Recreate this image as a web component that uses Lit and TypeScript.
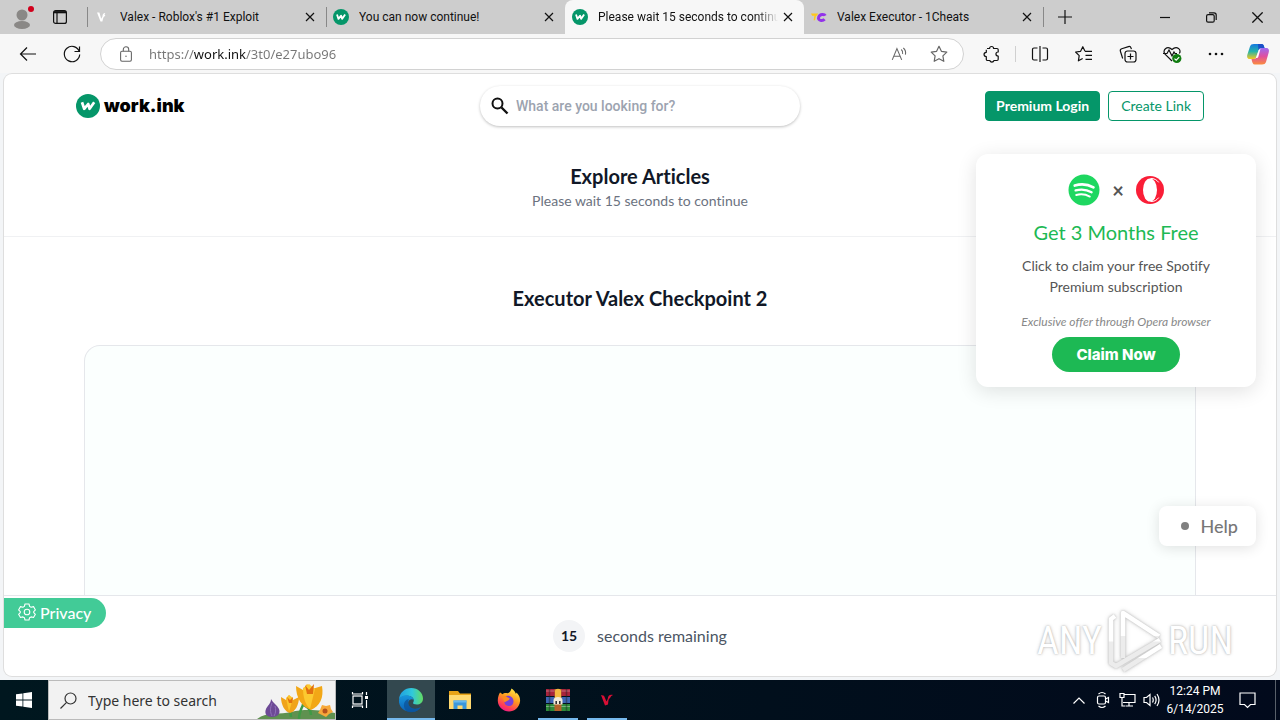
import { LitElement, html, css, svg } from "lit";
import { customElement } from "lit/decorators.js";

const workIcon = html`<svg viewBox="0 0 24 24" aria-hidden="true">
  <circle cx="12" cy="12" r="12" fill="#059669" />
  <path d="M6 8.200l2.200 6.600 4-4.800 1.400 4.800 4.600-6.600" fill="none" stroke="#fff" stroke-width="2.700" stroke-linejoin="round" />
</svg>`;

const valexIcon = html`<svg viewBox="0 0 16 16" aria-hidden="true">
  <path d="M3 3.500h2.400l1.800 6.200 1.300-2.400c-.2-1.600.8-3.400 2.800-3.400l-.8 1.800.9.8-1 1c-1 .6-1.300 1.900-2 5H6.500Z" fill="#fff" />
</svg>`;

const cheatsIcon = html`<svg viewBox="0 0 16 16" aria-hidden="true">
  <path d="M0 4.500h7l-1 2.200H5l-1 4.500H2.600l.8-4.500H1Z" fill="#ffc81e" />
  <path d="M14.300 6.600c-.8-1.500-5.300-2-6.600 1.400-1.300 4 4 4.300 5.900 2.300" fill="none" stroke="#9333ea" stroke-width="3" />
</svg>`;

const cross = html`<svg class="x" viewBox="0 0 10 10" aria-hidden="true"><path d="M1 1l8 8M9 1l-8 8" /></svg>`;

const line = (content: unknown, size = 20) => html`<svg class="line" width=${size} height=${size} viewBox="0 0 20 20" aria-hidden="true">${content}</svg>`;

const icons = {
  back: svg`<path d="M18 10H2.500M9 3.500L2.500 10 9 16.500" />`,
  reload: svg`<path d="M17.300 7.500A7.700 7.700 0 1 0 17.700 10.500M17.500 2.500v5h-5" />`,
  lock: svg`<rect x="4" y="7" width="12" height="11" rx="1.500" /><path d="M7 7V5a3 3 0 0 1 6 0v2" /><circle cx="10" cy="12.500" r=".8" fill="currentColor" stroke="none" />`,
  read: svg`<path d="M2.500 16.500L7.700 4l5.300 12.500M4.300 12.500h7M12.500 5c1.500 1.300 2 3 1.500 5M14.800 3.300c2.300 1.900 3 4.500 2.300 7.500" />`,
  star: svg`<path d="M10 2.300l2.400 5 5.400.8-3.900 3.800.9 5.400-4.800-2.600-4.800 2.600.9-5.400L2.200 8.100l5.400-.8Z" stroke-linejoin="round" />`,
  ext: svg`<path d="M5 4.500h2.600a2 2 0 0 1 4 0H15a1.200 1.200 0 0 1 1.200 1.200V8c-3 0-3 4 0 4v3.300a1.200 1.200 0 0 1-1.200 1.200h-3a2.200 2.200 0 0 1-4.200 0H5.500a1.200 1.200 0 0 1-1.200-1.200v-2.800c-3-.2-3-4 0-4.200V5.700" stroke-linejoin="round" />`,
  split: svg`<path d="M7.500 4H4a1.500 1.500 0 0 0-1.500 1.500v9A1.500 1.500 0 0 0 4 16h3.500M12.500 4H16a1.500 1.500 0 0 1 1.500 1.500v9A1.500 1.500 0 0 1 16 16h-3.500M10 2v16" />`,
  favs: svg`<path d="M11 7.300L8.800 2.700 6.600 7.300l-5 .7 3.600 3.600-.8 5.200 4.300-2.300M11 7.300h7M11.500 11.300H18M11.500 15.300H18" stroke-linejoin="round" />`,
  collections: svg`<rect x="7" y="7" width="11" height="11" rx="2.500" /><path d="M12.500 9.500v6M9.500 12.500h6M4.700 14.500L2.400 7.300A2 2 0 0 1 3.700 4.800L10.500 2.600a2 2 0 0 1 2.500 1.300l.4 1.200" />`,
  health: svg`<path d="M10 17L3 10.200C-.2 6.500 5 .8 10 5.500 15 .8 20 6 17.300 9.500M1 9.500h4l2-3.500 3 6 2-4 1 1.500h2" /><circle cx="14.800" cy="14.500" r="4.600" fill="#107c10" stroke="none" /><path d="M12.500 14.600l1.700 1.600 3-3" stroke="#fff" />`,
  dots: svg`<g fill="currentColor" stroke="none"><circle cx="4" cy="10" r="1.300" /><circle cx="10" cy="10" r="1.300" /><circle cx="16" cy="10" r="1.300" /></g>`,
};

const copilot = html`<svg width="24" height="24" viewBox="0 0 24 24" aria-hidden="true">
  <defs>
    <linearGradient id="ca" x1="0" y1="0" x2="0" y2="1"><stop offset="0" stop-color="#1478e0" /><stop offset=".5" stop-color="#26b4a8" /><stop offset="1" stop-color="#f5c81e" /></linearGradient>
    <linearGradient id="cb" x1="0" y1="0" x2="0" y2="1"><stop offset="0" stop-color="#9b6bf2" /><stop offset=".5" stop-color="#e04fa0" /><stop offset="1" stop-color="#fb8c3c" /></linearGradient>
  </defs>
  <path d="M8 2h7.500c2 0 2.300 1.500 3 4h-3.200c-1.500 0-2.300 1-2.800 2.600L10.300 15c-.6 1.500-1.300 2-3 2H3.600C1 17 .8 14.500 1.400 12.500L4 4.500C4.600 2.800 5.800 2 8 2Z" fill="url(#ca)" />
  <path d="M12 2h3.500c2 0 2.300 1.500 3 4h-3.200c-1.500 0-2.300 1-2.800 2.600Z" fill="#1b50c8" />
  <path d="M16 22.500H8.800c-2 0-2.600-2-3.300-5.500h2.200c1.700 0 2.300-.8 2.800-2.300l2.200-6.300c.5-1.600 1.300-2.400 3-2.400h4.600c2.700 0 3 2.500 2.400 4.500L20 20c-.6 1.700-1.800 2.500-4 2.500Z" fill="url(#cb)" />
  <path d="M10.800 13.500l1.800-5c.4-1 1-1.500 1.800-1.500l-2 7.500c-.4 1-.8 1.500-2.600 1.500Z" fill="#fff" />
</svg>`;

const spotify = html`<svg width="32" height="32" viewBox="0 0 32 32" aria-hidden="true">
  <circle cx="16" cy="16" r="15.500" fill="#1ed760" />
  <g fill="none" stroke="#fff" stroke-linecap="round"><path d="M6.800 11.500c6-1.700 13.300-1.100 18.600 1.900" stroke-width="2.800" /><path d="M7.600 16.400c5.400-1.500 11.400-.8 16 1.800" stroke-width="2.300" /><path d="M8.200 21c4.600-1.200 9.500-.7 13.600 1.600" stroke-width="1.900" /></g>
</svg>`;

const opera = html`<svg width="28" height="28" viewBox="0 0 28 28" aria-hidden="true">
  <circle cx="14" cy="14" r="14" fill="#fa1e37" />
  <ellipse cx="14" cy="14" rx="7" ry="11.500" fill="#fff" />
  <path d="M14.500 2.500c3.500-.3 6.500 1.500 8.200 3.900M14.500 25.500c3.500.3 6.500-1.500 8.200-3.900" fill="none" stroke="#fff" stroke-width="1" />
</svg>`;

const edge = html`<svg width="26" height="26" viewBox="0 0 26 26" aria-hidden="true">
  <defs>
    <linearGradient id="e1" x1="0" x2="1"><stop offset="0" stop-color="#1f9fe0" /><stop offset=".55" stop-color="#30c8dc" /><stop offset="1" stop-color="#63dc62" /></linearGradient>
    <linearGradient id="e2" x1="0" x2="0" y1="0" y2="1"><stop offset="0" stop-color="#1896dc" /><stop offset="1" stop-color="#0b62b8" /></linearGradient>
  </defs>
  <path d="M1 12.500C1.500 5.500 7 1 13.200 1 20 1 25 6 25 11.500c0 4-3 6-6.200 6-2.600 0-4.300-.8-3.600-2 1.300-2 .7-5.500-3.700-6.500C7 8 2.500 9.500 1 12.500Z" fill="url(#e1)" />
  <path d="M1 13c.8-3 4.400-5 8.500-4.600 3.500.4 5.800 2.300 6.300 4.600-1.500-1.500-4.800-1-5.500 2-.8 4 3.500 7.500 8 6.800 2-.3 3.700-1.300 4.500-1.800C21 23 17.500 25 13.500 25 6 25 .3 19.500 1 13Z" fill="url(#e2)" />
  <path d="M10 25C4.500 22 4.200 13.500 10.800 12c-1.800 4 .4 10 7.500 9.800 2-.1 3.700-1.300 4.500-1.800C19.500 25 15 25.800 10 25Z" fill="#0c4f94" opacity=".7" />
</svg>`;

const explorer = html`<svg width="24" height="24" viewBox="0 0 24 24" aria-hidden="true">
  <path d="M1 3h9l2 2.500h11V8H1Z" fill="#e8a317" /><path d="M1 7h22v14H1Z" fill="#ffd970" />
  <path d="M5.500 12.500h13V21h-4v-3.500h-5V21h-4Z" fill="#3b97dc" /><path d="M5.500 12.500h13v2h-13Z" fill="#69b9ee" />
</svg>`;

const firefox = html`<svg width="24" height="24" viewBox="0 0 24 24" aria-hidden="true">
  <defs><linearGradient id="ff" x1=".8" y1="0" x2=".3" y2="1"><stop offset="0" stop-color="#fff04a" /><stop offset=".45" stop-color="#ff9a1e" /><stop offset=".8" stop-color="#ff3d57" /><stop offset="1" stop-color="#f0178a" /></linearGradient></defs>
  <path d="M3 4.500c1 .3 1.800 1 2.200 1.800C7 4.800 9 5 10.500 5.300 12.500 4.800 13.800 3 14.500.5c2 1 3.500 3 4.300 5.200.4-.2.700-.7.700-1.200C22 7 23.500 10 23 13.500 22.300 19.500 17.500 23.500 12 23.500S1 19 .8 13C.7 9.500 1.800 6.500 3 4.500Z" fill="url(#ff)" />
  <path d="M8 8.500c2.500-1.500 8-1 8.500 4.500.2 3-2 5.500-5 5-3-.4-4.500-2.500-4-5l3.500-.5c1-.5 2-1.500.5-2.200Z" fill="#7a3fd8" /><path d="M5 9c2-1.500 4.500-1 5.500.5 1.500.3 2.500 1 2 1.500-2 .5-2.500 3-5 3" fill="#ff8a1e" />
</svg>`;

const winrar = html`<svg width="24" height="24" viewBox="0 0 24 24" aria-hidden="true">
  <path d="M0 1h24v7H0Z" fill="#a8243c" /><path d="M0 9h24v6H0Z" fill="#3d66b4" /><path d="M0 16h24v7H0Z" fill="#2d8a3a" />
  <path d="M0 3h24M0 18.500h24" stroke="#fff" stroke-opacity=".35" /><path d="M3.500 1v22M20.500 1v22" stroke="#222" stroke-opacity=".45" stroke-width="1.500" />
  <path d="M8.500 1h7v22h-7Z" fill="#b5622a" /><path d="M9 3c0-3 6-3 6 0v7H9Z" fill="#f5b942" /><path d="M7.500 16.500V12c0-4 9-4 9 0v4.500Z" fill="#f2ead8" /><path d="M10.200 16v-3M13.800 16v-3" fill="none" stroke="#333" stroke-width="1.600" />
</svg>`;

const valexRed = html`<svg width="20" height="20" viewBox="0 0 20 20" aria-hidden="true">
  <path d="M4 5l4 10.500 3-1C11.500 11 11.200 9 13 8l1.300-2L16 5c-3-1-5 .5-5.200 3.800L9.500 11.500 7 5.800Z" fill="#d80f35" />
</svg>`;

const flowers = html`<svg class="flowers" width="78" height="38" viewBox="0 0 78 38" aria-hidden="true">
  <path d="M0 38c10-8 24-4 34-7 16-4 34-1 44 1v6Z" fill="#5f9150" />
  <path d="M42 38c0-6 2-10 4-14M54 34c0-6-4-8-9-11M34 36c0-4-1-8-3-12" stroke="#3e9a45" stroke-width="2.500" fill="none" />
  <path d="M14 18c2 4 6 6 8 10 2 5-2 8-7 8s-8-3-6-8c1-3 5-5 5-10Z" fill="#6d4a96" /><path d="M15 22c-2 5-2 9 0 13M18 25c1 3 1 7-1 10" stroke="#8f70b8" fill="none" />
  <path d="M24 16l5 3 3-5 4 5 6-3c0 8-4 15-9 16-5-1-9-8-9-16Z" fill="#f0a31a" /><path d="M29 17l3-3 4 3-4 14Z" fill="#fcc42c" />
  <path d="M39 5l7 4 4-6 5 5 10-3c2 12-2 20-11 24-9-3-15-12-15-24Z" fill="#f2a716" /><path d="M46 7l6-4 6 5-5 20c-5-5-7-12-7-21Z" fill="#fcc930" /><path d="M48 4l4 5 5-6-1 10h-6Z" fill="#e2700f" /><path d="M30 16l3 3 3-3-1 6h-3Z" fill="#e2700f" />
  <path d="M65 24l4 1 4-1 1 4 2 3-4 2-3 3-4-2-4-2 2-3Z" fill="#f7a83a" /><circle cx="68" cy="30" r="2.500" fill="#b5521c" />
</svg>`;

const watermark = html`<svg class="play" width="58" height="66" viewBox="0 0 58 66" aria-hidden="true">
  <defs><linearGradient id="wm" x1="0" x2="0" y1="0" y2="1"><stop offset=".5" stop-color="#fff" /><stop offset=".52" stop-color="#ececec" /></linearGradient></defs>
  <g fill="none" stroke="url(#wm)" stroke-width="4.500" stroke-linejoin="round">
    <path d="M17 50V5l36 23.500" />
    <path d="M9 8L5 11v44l5 3 44-26" />
    <path d="M17 62l38-24" />
  </g>
</svg>`;

interface Tab { title: string; icon: unknown; active?: boolean }

const tabs: Tab[] = [
  { title: "Valex - Roblox's #1 Exploit", icon: valexIcon },
  { title: "You can now continue!", icon: workIcon },
  { title: "Please wait 15 seconds to continue", icon: workIcon, active: true },
  { title: "Valex Executor - 1Cheats", icon: cheatsIcon },
];

const reset = css`
  *, *::before, *::after { box-sizing: border-box; }
  button, input { font: inherit; color: inherit; border: 0; padding: 0; margin: 0; background: none; outline: none; }
  button { display: flex; align-items: center; justify-content: center; flex: none; }
  svg { display: block; flex: none; }
  .line, .x { fill: none; stroke: currentColor; stroke-width: 1.2; }
`;

@customElement("browser-chrome")
class BrowserChrome extends LitElement {
  static styles = [reset, css`
    :host { display: block; font-family: "Open Sans", "Noto Sans", sans-serif; color: #111; }
    .strip { display: flex; height: 34px; background: #cdcdcd; }
    .lead { display: flex; align-items: center; width: 87px; padding-left: 12px; gap: 17px; }
    .tabs { display: flex; flex: 0 1 956px; min-width: 0; }
    .tab { position: relative; display: flex; flex: 1 1 0; min-width: 0; align-items: center; padding: 0 8px 0 7px; font: 12px/18px Roboto, sans-serif; }
    .tab::before { content: ""; align-self: center; width: 1px; height: 20px; margin: 0 6px 0 -7px; background: #888; }
    .tab > svg { width: 16px; height: 16px; }
    .name { flex: 1; margin-left: 10px; white-space: nowrap; overflow: hidden; }
    .active { background: #f7f7f7; border-radius: 8px 8px 0 0; }
    .active .name { margin-right: -8px; mask-image: linear-gradient(90deg, #000 88%, transparent); }
    .active::before, .active + .tab::before { background: transparent; }
    .close { width: 16px; height: 24px; margin-left: 10px; }
    .close svg { width: 10px; height: 10px; }
    .new { width: 44px; position: relative; }
    .new::before { content: ""; position: absolute; left: 0; top: 7px; width: 1px; height: 20px; background: #888; }
    .window { display: flex; margin-left: auto; }
    .window button { width: 46px; }
    .bar { display: flex; align-items: center; height: 39px; background: #f7f7f7; padding: 0 2px 0 6px; }
    .bar > button { width: 44px; height: 32px; }
    .address { display: flex; flex: 1; min-width: 0; align-items: center; height: 32px; margin: 0 6px; padding: 0 14px 0 16px; border: 1px solid #d2d2d2; border-radius: 16px; background: #fff; color: #666; gap: 10px; }
    .address button { width: 20px; margin-left: 10px; }
    .url { flex: 1; min-width: 0; font: 13px/20px "Noto Sans", sans-serif; margin-left: 4px; color: transparent; background: linear-gradient(90deg, #767676 45px, #111 45px, #111 97px, #767676 97px); -webkit-background-clip: text; background-clip: text; }
    .rule { width: 1px; height: 16px; background: #d0d0d0; margin: 0 2px 0 1px; }
    .bar > .copilot { width: 40px; }
  `];

  render() {
    return html`
      <div class="strip">
        <div class="lead">
          <svg width="24" height="26" viewBox="0 0 24 26" aria-hidden="true"><circle cx="10" cy="11" r="5.500" fill="#8a8886" /><ellipse cx="10" cy="21" rx="8" ry="4" fill="#8a8886" /><circle cx="19" cy="5" r="3" fill="#d1001c" /></svg>
          <svg width="14" height="14" viewBox="0 0 14 14" aria-hidden="true"><rect x=".6" y=".6" width="12.800" height="12.800" rx="2" fill="none" stroke="#111" stroke-width="1.200" /><path d="M1 2.200h12" stroke="#111" stroke-width="2.200" /><path d="M4 3v10" stroke="#111" stroke-width="1.200" /></svg>
        </div>
        <div class="tabs" role="tablist">
          ${tabs.map((t) => html`<div class="tab ${t.active ? "active" : ""}" role="tab" aria-selected=${t.active ? "true" : "false"}>
            ${t.icon}<span class="name">${t.title}</span><button class="close" aria-label="Close tab">${cross}</button>
          </div>`)}
        </div>
        <button class="new" aria-label="New tab"><svg class="line" width="14" height="14" viewBox="0 0 14 14"><path d="M7 0v14M0 7h14" /></svg></button>
        <div class="window">
          <button aria-label="Minimize"><svg class="line" width="10" height="10" viewBox="0 0 10 10"><path d="M0 5.500h10" /></svg></button>
          <button aria-label="Restore"><svg class="line" width="11" height="11" viewBox="0 0 11 11"><rect x=".6" y="2.600" width="7.600" height="7.600" rx="1.500" /><path d="M3 .8h5a2.200 2.200 0 0 1 2.200 2.200v5" /></svg></button>
          <button aria-label="Close"><svg class="line" width="11" height="11" viewBox="0 0 10 10"><path d="M.3.3l9.400 9.400M9.700.3L.3 9.700" /></svg></button>
        </div>
      </div>
      <div class="bar">
        <button aria-label="Back">${line(icons.back)}</button>
        <button aria-label="Refresh">${line(icons.reload)}</button>
        <div class="address">
          ${line(icons.lock, 18)}
          <input class="url" aria-label="Address" value="https://work.ink/3t0/e27ubo96" />
          <button aria-label="Read aloud">${line(icons.read, 18)}</button>
          <button aria-label="Favorite">${line(icons.star)}</button>
        </div>
        <button aria-label="Extensions">${line(icons.ext)}</button>
        <span class="rule"></span>
        <button aria-label="Split screen">${line(icons.split)}</button>
        <button aria-label="Favorites">${line(icons.favs)}</button>
        <button aria-label="Collections">${line(icons.collections)}</button>
        <button aria-label="Browser essentials">${line(icons.health)}</button>
        <button aria-label="Settings">${line(icons.dots)}</button>
        <button class="copilot" aria-label="Copilot">${copilot}</button>
      </div>`;
  }
}

@customElement("work-page")
class WorkPage extends LitElement {
  static styles = [reset, css`
    :host { position: relative; display: flex; flex-direction: column; min-height: 0; overflow: hidden; background: #fff; font-family: Lato, sans-serif; font-variant-ligatures: none; color: #111827; border-radius: 8px; box-shadow: 0 0 0 1px #dedede; }
    h1, h2, h3, p { margin: 0; }
    header { display: grid; grid-template-columns: 1fr 320px 1fr; align-items: center; padding: 12px 72px; }
    .brand { display: flex; align-items: center; gap: 4px; color: #000; text-decoration: none; font: 900 18px/24px Inter, sans-serif; }
    .brand svg { width: 24px; height: 24px; }
    .search { display: flex; align-items: center; height: 40px; padding: 0 10px; gap: 6px; border-radius: 20px; box-shadow: 0 1px 3px rgba(0, 0, 0, .25); }
    .search input { flex: 1; min-width: 0; font: 500 14px/20px Roboto, sans-serif; }
    .search input::placeholder { color: #9ca3af; opacity: 1; }
    .actions { display: flex; justify-content: flex-end; gap: 8px; }
    .actions button { height: 30px; padding: 0 12px 2px; border: 1px solid #059669; border-radius: 4px; font-size: 14px; color: #059669; white-space: nowrap; }
    .actions .primary { padding: 0 10px 2px; background: #059669; color: #fff; font-weight: 700; }
    main { flex: 1; min-height: 0; overflow: hidden; display: flex; flex-direction: column; text-align: center; }
    .intro { padding: 24px 0; border-bottom: 1px solid #f0f1f3; }
    h1, h2 { font-size: 20px; line-height: 28px; font-weight: 700; }
    .intro p { font-size: 14px; line-height: 22px; color: #6b7280; }
    .article { flex: 1; display: flex; flex-direction: column; padding: 47px 80px 0; gap: 33px; }
    .panel { flex: 1; border: 1px solid #e5e7eb; border-bottom: 0; border-radius: 16px 16px 0 0; background: #fbfffe; }
    footer { display: flex; align-items: center; justify-content: center; gap: 12px; padding: 24px 0; border-top: 1px solid #e5e7eb; color: #4b5563; font-size: 16px; line-height: 20px; }
    .count { display: grid; place-items: center; width: 32px; height: 32px; border-radius: 50%; background: #f3f4f6; color: #111827; font-size: 14px; font-weight: 700; }
    .offer { position: absolute; top: 80px; right: 20px; width: 280px; padding: 20px 24px 15px; display: flex; flex-direction: column; align-items: center; text-align: center; border-radius: 12px; background: #fff; box-shadow: 0 4px 20px rgba(0, 0, 0, .12); }
    .logos { display: flex; align-items: center; gap: 12px; color: #555; font: 700 20px/32px Lato, sans-serif; }
    .offer h3 { margin-top: 12px; font-size: 20px; line-height: 28px; font-weight: 400; color: #1db954; }
    .offer p { margin-top: 9px; padding: 0 16px; font-size: 14px; line-height: 21px; color: #555; }
    .offer .note { margin-top: 16px; padding: 0; font-size: 12px; line-height: 17px; font-style: italic; color: #888; }
    .claim { height: 35px; margin-top: 7px; padding: 0 24px; border-radius: 18px; background: #1db954; color: #fff; font: 800 15px/20px Inter, sans-serif; }
    .help { position: absolute; right: 20px; bottom: 130px; height: 40px; padding: 0 18px 0 22px; gap: 12px; border-radius: 8px; background: #fff; box-shadow: 0 2px 14px rgba(0, 0, 0, .12); color: #777; font-size: 18px; font-weight: 500; }
    .help::before { content: ""; width: 8px; height: 8px; border-radius: 50%; background: #808080; }
    .privacy { position: absolute; left: 0; bottom: 48px; height: 30px; padding: 0 15px 2px 14px; gap: 4px; border-radius: 0 15px 15px 0; background: #42cb97; color: #fff; font-size: 16px; font-weight: 500; }
    .mark { position: absolute; right: 43px; bottom: 2px; display: flex; align-items: center; gap: 4px; color: #fff; font: 400 38px/40px "Roboto Condensed", "Liberation Sans Narrow", Roboto, sans-serif; text-shadow: 0 0 2px #aaa, 0 0 4px #ddd; pointer-events: none; }
    .play { filter: drop-shadow(0 0 1px #bbb) drop-shadow(0 0 2px #ddd); }
  `];

  render() {
    return html`
      <header>
        <a class="brand" href="#">${workIcon}<span>work.ink</span></a>
        <label class="search">
          <svg width="20" height="20" viewBox="0 0 20 20" aria-hidden="true"><circle cx="7.500" cy="7.500" r="5" fill="none" stroke="#111" stroke-width="2" /><path d="M11.500 11.500l6 6" stroke="#111" stroke-width="2.400" /></svg>
          <input type="search" aria-label="Search" placeholder="What are you looking for?" />
        </label>
        <div class="actions"><button class="primary">Premium Login</button><button>Create Link</button></div>
      </header>
      <main>
        <section class="intro"><h1>Explore Articles</h1><p>Please wait 15 seconds to continue</p></section>
        <section class="article"><h2>Executor Valex Checkpoint 2</h2><div class="panel"></div></section>
      </main>
      <footer><span class="count">15</span><span>seconds remaining</span></footer>
      <aside class="offer">
        <div class="logos">${spotify}<span>×</span>${opera}</div>
        <h3>Get 3 Months Free</h3>
        <p>Click to claim your free Spotify Premium subscription</p>
        <p class="note">Exclusive offer through Opera browser</p>
        <button class="claim">Claim Now</button>
      </aside>
      <button class="help">Help</button>
      <button class="privacy">
        <svg width="18" height="18" viewBox="0 0 18 18" fill="none" stroke="#fff" stroke-width="1.100" stroke-linejoin="round" aria-hidden="true"><circle cx="9" cy="9" r="2.800" /><path d="M7 1h4l.6 2.400 1.500.9 2.400-.7 1.900 3.300L15.700 8.600v1l1.700 1.700-1.900 3.200-2.400-.6-1.500.8L11 17H7l-.6-2.300-1.500-.8-2.400.6-1.900-3.200 1.700-1.700v-1L.6 6.900l1.900-3.300 2.400.7 1.500-.9Z" /></svg>
        Privacy
      </button>
      <div class="mark"><span>ANY</span>${watermark}<span>RUN</span></div>`;
  }
}

@customElement("task-bar")
class TaskBar extends LitElement {
  static styles = [reset, css`
    :host { display: flex; height: 40px; background: linear-gradient(90deg, #00171f, #010f1c 60%, #020a1c); color: #fff; font-family: "Noto Sans", sans-serif; }
    .app { position: relative; width: 48px; height: 40px; margin-right: 1px; }
    .start { margin: 0; }
    .search { display: flex; align-items: center; width: 288px; border: 1px solid #bbb; background: #f2f2f2; color: #333; padding-left: 11px; gap: 11px; overflow: hidden; }
    .search input { flex: 1; min-width: 0; font-size: 14px; }
    .search input::placeholder { color: #333; opacity: 1; }
    .flowers { margin-left: -10px; }
    .task { margin-right: 3px; }
    .current { background: #33484f; }
    .open::after { content: ""; position: absolute; left: 4px; right: 4px; bottom: 0; height: 2px; background: #76b9ed; }
    .current::after { left: 0; right: 0; }
    .tray { display: flex; align-items: center; margin-left: auto; }
    .tray button { width: 24px; height: 40px; }
    .tray .clock { width: 64px; flex-direction: column; font: 12px/18px Roboto, sans-serif; white-space: nowrap; }
    .tray .notice { width: 40px; margin-right: 8px; }
    .desktop { width: 5px; height: 40px; border-left: 1px solid #59606a; }
  `];

  private app(icon: unknown, label: string, cls = "") {
    return html`<button class="app ${cls}" aria-label=${label}>${icon}</button>`;
  }

  render() {
    return html`
      ${this.app(html`<svg width="16" height="16" viewBox="0 0 16 16" fill="#fff"><path d="M0 2.300l6.500-.9v6.200H0ZM7.300 1.300L16 0v7.600H7.300ZM0 8.400h6.500v6.200L0 13.700ZM7.300 8.400H16V16l-8.700-1.300Z" /></svg>`, "Start", "start")}
      <label class="search">
        <svg class="line" width="17" height="17" viewBox="0 0 17 17" aria-hidden="true"><circle cx="10.500" cy="6.500" r="5.500" /><path d="M6.600 10.400L.5 16.500" /></svg>
        <input aria-label="Search Windows" placeholder="Type here to search" />
        ${flowers}
      </label>
      ${this.app(html`<svg class="line" width="18" height="18" viewBox="0 0 18 18"><rect x="2" y="5" width="9" height="8" /><path d="M1.500 1v2h10V1M1.500 17v-2h10v2M15.500 1v3M15.500 9v8" /><path d="M14 6.500h3" stroke-width="3" /></svg>`, "Task view", "task")}
      ${this.app(edge, "Edge", "open current")}
      ${this.app(explorer, "File Explorer")}
      ${this.app(firefox, "Firefox")}
      ${this.app(winrar, "WinRAR", "open")}
      ${this.app(valexRed, "Valex", "open")}
      <div class="tray">
        <button aria-label="Show hidden icons"><svg class="line" width="12" height="7" viewBox="0 0 12 7"><path d="M.5 6.500L6 1l5.500 5.500" /></svg></button>
        <button aria-label="Meet now"><svg class="line" width="14" height="18" viewBox="0 0 14 18"><rect x="1.500" y="5" width="8" height="8" rx="1.500" /><path d="M9.500 8l3-1.500v5L9.500 10M2.500 3Q6 0 9.500 3M2.500 15q3.500 3 7 0" /></svg></button>
        <button aria-label="Network"><svg class="line" width="17" height="16" viewBox="0 0 17 16"><path d="M5 2.500h11v8H4M10 10.500v3M6.500 14H14M1 1.500h4v4H1ZM3 5.500V14h3" /></svg></button>
        <button aria-label="Volume"><svg class="line" width="17" height="16" viewBox="0 0 17 16"><path d="M1 5.500h2.500l3.500-3v11l-3.500-3H1ZM9.500 5.500q1.500 2.500 0 5M11.700 3.800q2.800 4.200 0 8.400M14 2q4 6 0 12" /></svg></button>
        <button class="clock"><span>12:24 PM</span><span>6/14/2025</span></button>
        <button class="notice" aria-label="Notifications"><svg class="line" width="17" height="17" viewBox="0 0 17 17"><path d="M1 1h15v11.500h-4.500l-3 3-3-3H1Z" /></svg></button>
        <span class="desktop"></span>
      </div>`;
  }
}

@customElement("app-root")
class AppRoot extends LitElement {
  static styles = css`
    :host { display: flex; flex-direction: column; height: 100vh; background: #f3f5f7; }
    work-page { flex: 1; margin: 1px 4px 4px; }
  `;

  render() {
    return html`<browser-chrome></browser-chrome><work-page></work-page><task-bar></task-bar>`;
  }
}
